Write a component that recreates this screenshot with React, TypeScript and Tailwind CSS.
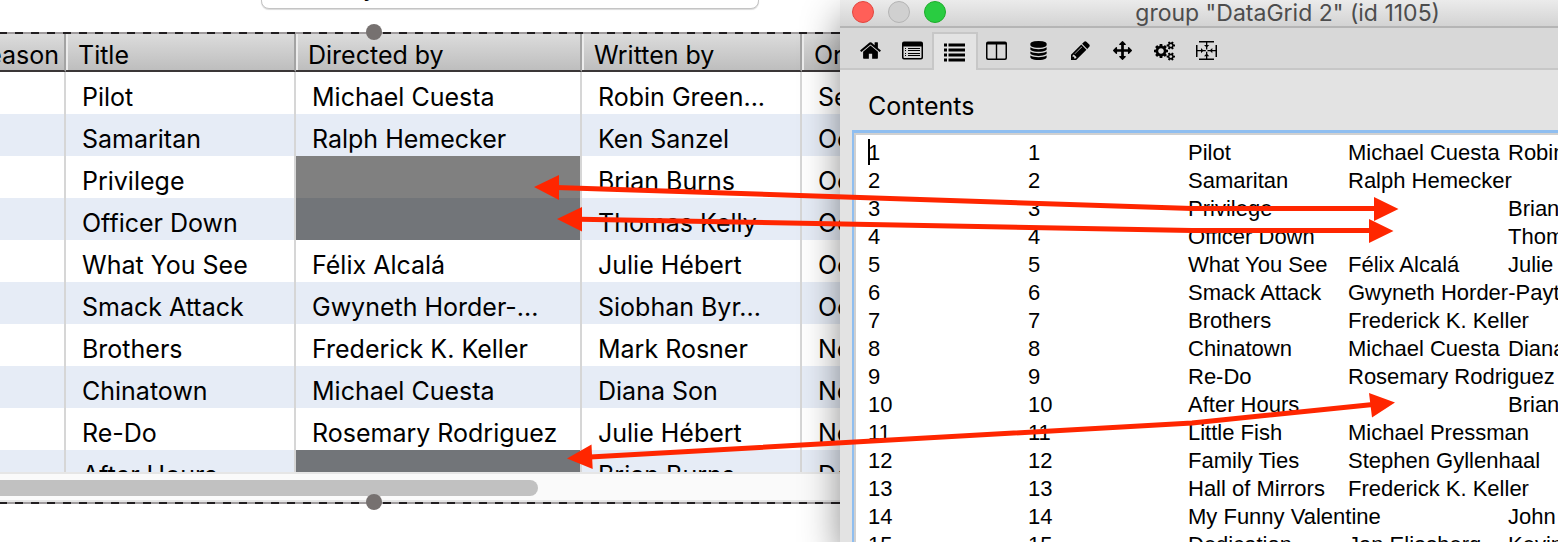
import React from "react";

type Episode = { title: string; director: string; writer: string; aired: string; missing?: boolean };

const episodes: Episode[] = [
  { title: "Pilot", director: "Michael Cuesta", writer: "Robin Green...", aired: "Sep" },
  { title: "Samaritan", director: "Ralph Hemecker", writer: "Ken Sanzel", aired: "Oct" },
  { title: "Privilege", director: "", writer: "Brian Burns", aired: "Oct", missing: true },
  { title: "Officer Down", director: "", writer: "Thomas Kelly", aired: "Oct", missing: true },
  { title: "What You See", director: "Félix Alcalá", writer: "Julie Hébert", aired: "Oct" },
  { title: "Smack Attack", director: "Gwyneth Horder-...", writer: "Siobhan Byr...", aired: "Oct" },
  { title: "Brothers", director: "Frederick K. Keller", writer: "Mark Rosner", aired: "Nov" },
  { title: "Chinatown", director: "Michael Cuesta", writer: "Diana Son", aired: "Nov" },
  { title: "Re-Do", director: "Rosemary Rodriguez", writer: "Julie Hébert", aired: "Nov" },
  { title: "After Hours", director: "", writer: "Brian Burns", aired: "Dec", missing: true },
];

const contents = [
  "1\t1\tPilot\tMichael Cuesta\tRobin",
  "2\t2\tSamaritan\tRalph Hemecker",
  "3\t3\tPrivilege\t\tBrian",
  "4\t4\tOfficer Down\t\tThomas",
  "5\t5\tWhat You See\tFélix Alcalá\tJulie",
  "6\t6\tSmack Attack\tGwyneth Horder-Payton",
  "7\t7\tBrothers\tFrederick K. Keller",
  "8\t8\tChinatown\tMichael Cuesta\tDiana",
  "9\t9\tRe-Do\tRosemary Rodriguez",
  "10\t10\tAfter Hours\t\tBrian",
  "11\t11\tLittle Fish\tMichael Pressman",
  "12\t12\tFamily Ties\tStephen Gyllenhaal",
  "13\t13\tHall of Mirrors\tFrederick K. Keller",
  "14\t14\tMy Funny Valentine\tJohn",
  "15\t15\tDedication\tJan Eliasberg\tKevin",
].join("\n");

const HomeIcon = () => (
  <svg viewBox="0 0 1792 1792" className="size-[23px]" fill="currentColor">
    <path d="M1472 992v480q0 26-19 45t-45 19h-384v-384h-256v384h-384q-26 0-45-19t-19-45v-480q0-1 .5-3t.5-3l575-474 575 474q1 2 1 6zm223-69l-62 74q-8 9-21 11h-3q-13 0-21-7l-692-577-692 577q-12 8-24 7-13-2-21-11l-62-74q-8-10-7-23.5t11-21.5l719-599q32-26 76-26t76 26l244 204v-195q0-14 9-23t23-9h192q14 0 23 9t9 23v408l219 182q10 8 11 21.5t-7 23.5z" />
  </svg>
);

const FormIcon = () => (
  <svg viewBox="0.5 0.5 21 21" className="size-[21px]" fill="currentColor">
    <path fillRule="evenodd" d="M2.5 2h17A2 2 0 0 1 21.500 4v14a2 2 0 0 1-2 2h-17a2 2 0 0 1-2-2V4a2 2 0 0 1 2-2ZM2 7v10.800a.7.7 0 0 0 .7.700h16.600a.7.7 0 0 0 .7-.7V7Z" />
    <path d="M3.500 8.500h1v1h-1zM6.500 8.500h12v1h-12zM3.500 10.500h1v1h-1zM6.500 10.500h12v1h-12zM3.500 13.500h1v1h-1zM6.500 13.500h12v1h-12zM3.500 15.500h1v1h-1zM6.500 15.500h12v1h-12z" />
  </svg>
);

const ListIcon = () => (
  <svg viewBox="0.5 0.5 21 21" className="size-[21px]" fill="currentColor">
    <path d="M.5 2h3v3h-3zM5 2h16.500v3H5zM.5 7h3v3h-3zM5 7h16.500v3H5zM.5 12h3v3h-3zM5 12h16.500v3H5zM.5 17h3v3h-3zM5 17h16.500v3H5z" />
  </svg>
);

const ColumnsIcon = () => (
  <svg viewBox="0.5 0.5 21 21" className="size-[21px]" fill="currentColor">
    <path fillRule="evenodd" d="M2.500 2h17a2 2 0 0 1 2 2v14.500a2 2 0 0 1-2 2h-17a2 2 0 0 1-2-2V4a2 2 0 0 1 2-2ZM2 5v13.300a.7.7 0 0 0 .7.700h7.600V5Zm9.700 0v14h7.600a.7.7 0 0 0 .7-.7V5Z" />
  </svg>
);

const DatabaseIcon = () => (
  <svg viewBox="0 0 1792 1792" className="size-[19px]" fill="currentColor">
    <path d="M896 768q237 0 443-43t325-127v170q0 69-103 128t-280 93.5-385 34.5-385-34.5-280-93.5-103-128v-170q119 84 325 127t443 43zm0 768q237 0 443-43t325-127v170q0 69-103 128t-280 93.5-385 34.5-385-34.5-280-93.5-103-128v-170q119 84 325 127t443 43zm0-384q237 0 443-43t325-127v170q0 69-103 128t-280 93.5-385 34.5-385-34.5-280-93.5-103-128v-170q119 84 325 127t443 43zm0-1152q208 0 385 34.5t280 93.5 103 128v128q0 69-103 128t-280 93.5-385 34.5-385-34.5-280-93.5-103-128v-128q0-69 103-128t280-93.5 385-34.5z" />
  </svg>
);

const PencilIcon = () => (
  <svg viewBox="128 128 1536 1536" className="size-[19px]" fill="currentColor">
    <path d="M491 1536l91-91-235-235-91 91v107h128v128h107zm523-928q0-22-22-22-10 0-17 7l-542 542q-7 7-7 17 0 22 22 22 10 0 17-7l542-542q7-7 7-17zm-54-192l416 416-832 832h-416v-416zm683 96q0 53-37 90l-166 166-416-416 166-165q36-38 90-38 53 0 91 38l235 234q37 39 37 91z" />
  </svg>
);

const MoveIcon = () => (
  <svg viewBox="0 0 1792 1792" className="size-[19px]" fill="currentColor">
    <path d="M1792 896q0 26-19 45l-256 256q-19 19-45 19t-45-19-19-45v-128h-384v384h128q26 0 45 19t19 45-19 45l-256 256q-19 19-45 19t-45-19l-256-256q-19-19-19-45t19-45 45-19h128v-384h-384v128q0 26-19 45t-45 19-45-19l-256-256q-19-19-19-45t19-45l256-256q19-19 45-19t45 19 19 45v128h384v-384h-128q-26 0-45-19t-19-45 19-45l256-256q19-19 45-19t45 19l256 256q19 19 19 45t-19 45-45 19h-128v384h384v-128q0-26 19-45t45-19 45 19l256 256q19 19 19 45z" />
  </svg>
);

const CogsIcon = () => (
  <svg viewBox="0 0 1920 1792" className="h-[20px] w-[21px]" fill="currentColor">
    <path d="M896 896q0-106-75-181t-181-75-181 75-75 181 75 181 181 75 181-75 75-181zm768 512q0-52-38-90t-90-38-90 38-38 90q0 53 37.5 90.5t90.5 37.5 90.5-37.5 37.5-90.5zm0-1024q0-52-38-90t-90-38-90 38-38 90q0 53 37.5 90.5t90.5 37.5 90.5-37.5 37.5-90.5zm-384 421v185q0 10-7 19.5t-16 10.5l-155 24q-11 35-32 76 34 48 90 115 7 11 7 20 0 12-7 19-23 30-82.500 89.500t-78.500 59.500q-11 0-21-7l-115-90q-37 19-77 31-11 108-23 155-7 24-30 24h-186q-11 0-20-7.500t-10-17.500l-23-153q-34-10-75-31l-118 89q-7 7-20 7-11 0-21-8-144-133-144-160 0-9 7-19 10-14 41-53t47-61q-23-44-35-82l-152-24q-10-1-17-9.500t-7-19.500v-185q0-10 7-19.500t16-10.500l155-24q11-35 32-76-34-48-90-115-7-11-7-20 0-12 7-20 22-30 82-89t79-59q11 0 21 7l115 90q34-18 77-32 11-108 23-154 7-24 30-24h186q11 0 20 7.500t10 17.500l23 153q34 10 75 31l118-89q8-7 20-7 11 0 21 8 144 133 144 160 0 8-7 19-12 16-42 54t-45 60q23 48 34 82l152 23q10 2 17 10.500t7 19.500zm640 533v140q0 16-149 31-12 27-30 52 51 113 51 138 0 4-4 7-122 71-124 71-8 0-46-47t-52-68q-20 2-30 2t-30-2q-14 21-52 68t-46 47q-2 0-124-71-4-3-4-7 0-25 51-138-18-25-30-52-149-15-149-31v-140q0-16 149-31 13-29 30-52-51-113-51-138 0-4 4-7 4-2 35-20t59-34 30-16q8 0 46 46.500t52 67.500q20-2 30-2t30 2q51-71 92-112l6-2q4 0 124 70 4 3 4 7 0 25-51 138 17 23 30 52 149 15 149 31zm0-1024v140q0 16-149 31-12 27-30 52 51 113 51 138 0 4-4 7-122 71-124 71-8 0-46-47t-52-68q-20 2-30 2t-30-2q-14 21-52 68t-46 47q-2 0-124-71-4-3-4-7 0-25 51-138-18-25-30-52-149-15-149-31v-140q0-16 149-31 13-29 30-52-51-113-51-138 0-4 4-7 4-2 35-20t59-34 30-16q8 0 46 46.500t52 67.500q20-2 30-2t30 2q51-71 92-112l6-2q4 0 124 70 4 3 4 7 0 25-51 138 17 23 30 52 149 15 149 31z" />
  </svg>
);

const ResizeIcon = () => (
  <svg viewBox="0 0 21 21" className="size-[21px]" fill="currentColor">
    <path d="M3 1h15v1.500H3zM3 18.500h15V20H3zM0 5h1.500v12H0zM19.500 5H21v12h-1.500zM10 2h1.300v7.500H10zM10 11.700h1.300V19H10zM1 10h8.800v1.300H1zM11.500 10H20v1.300h-8.500z" />
    <path d="M10.600 7.500L8 5h5.300zM10.600 13.500L8 16.200h5.300zM7.500 10.600L5 8v5.300zM13.700 10.600L16.300 8v5.300z" />
  </svg>
);

const tools = [
  { label: "Basic", icon: <HomeIcon /> },
  { label: "Custom", icon: <FormIcon /> },
  { label: "Contents", icon: <ListIcon /> },
  { label: "Columns", icon: <ColumnsIcon /> },
  { label: "Database", icon: <DatabaseIcon /> },
  { label: "Colors", icon: <PencilIcon /> },
  { label: "Position", icon: <MoveIcon /> },
  { label: "Advanced", icon: <CogsIcon /> },
  { label: "Geometry", icon: <ResizeIcon /> },
];

function SelectionEdge() {
  return (
    <div className="relative h-[2px] bg-[repeating-linear-gradient(90deg,#211e20_0_8px,#9f9b9d_8px_16px)] bg-[position:-1px_0]">
      <span className="absolute -top-2 left-[366px] z-10 size-4 rounded-full bg-[#767170]" />
    </div>
  );
}

const headCell =
  "overflow-hidden border-r-2 border-b-2 border-r-[#a3a3a3] border-b-[#3a3637] p-0 text-left font-normal last:border-r-0";
const bodyCell = "overflow-hidden whitespace-nowrap border-r-2 border-[#d6d6d6] py-0 pr-0 pl-4 last:border-r-0";

function DataGrid() {
  return (
    <section className="flex flex-col">
      <SelectionEdge />
      <div className="h-[438px] overflow-hidden">
        <table className="w-full table-fixed border-separate border-spacing-0 text-[25px] leading-[42px]">
          <colgroup>
            <col className="w-[66px]" />
            <col className="w-[230px]" />
            <col className="w-[286px]" />
            <col className="w-[220px]" />
            <col />
          </colgroup>
          <thead>
            <tr className="h-[38px] bg-linear-to-b from-[#dcdcdc] to-[#bcbcbc] leading-9">
              <th className={headCell}>
                <span className="flex h-9 items-center justify-end pt-[6px] pr-[5px]">Season</span>
              </th>
              {["Title", "Directed by", "Written by", "Original"].map((name) => (
                <th key={name} className={headCell}>
                  <span className="flex h-9 items-center border-l-2 border-[#ececec] pt-[6px] pl-[10px] whitespace-nowrap">{name}</span>
                </th>
              ))}
            </tr>
          </thead>
          <tbody>
            {episodes.map((e, i) => (
              <tr key={i} className="h-[42px] odd:bg-white even:bg-[#e6ecf6]">
                <td className={bodyCell} />
                <td className={bodyCell}><span className="block h-[42px] pt-1">{e.title}</span></td>
                <td className={`${bodyCell} ${e.missing ? (i % 2 ? "bg-[#727579] bg-clip-padding" : "bg-[#808080] bg-clip-padding") : ""}`}>
                  <span className="block h-[42px] pt-1">{e.director}</span>
                </td>
                <td className={bodyCell}><span className="block h-[42px] pt-1">{e.writer}</span></td>
                <td className={bodyCell}><span className="block h-[42px] pt-1">{e.aired}</span></td>
              </tr>
            ))}
          </tbody>
        </table>
      </div>
      <div className="border-y-2 border-[#e6e6e6] bg-[#fafafa] pt-[6px] pb-1">
        <div className="h-4 w-[538px] rounded-r-full bg-[#c1c1c1]" />
      </div>
      <SelectionEdge />
    </section>
  );
}

function Inspector() {
  return (
    <section className="relative flex min-w-0 flex-col bg-[#e3e3e3] shadow-[0_16px_36px_rgba(0,0,0,0.45)]">
      <header className="flex h-7 items-center border-b-2 border-[#b5b5b5] bg-linear-to-b from-[#ebebeb] to-[#d3d3d3] pl-3">
        <div className="flex gap-[14px] pb-[2px]">
          <button aria-label="Close" className="size-[22px] rounded-full border border-[#e2463f] bg-[#ff5f58]" />
          <button aria-label="Minimize" className="size-[22px] rounded-full border border-[#b4b4b4] bg-[#d0d0d0]" />
          <button aria-label="Zoom" className="size-[22px] rounded-full border border-[#1dad2b] bg-[#29cc41]" />
        </div>
        <h1 className="flex-1 pr-[118px] text-right text-[23px] leading-6 whitespace-nowrap text-[#4d4d4d]">group "DataGrid 2" (id 1105)</h1>
      </header>
      <nav className="flex h-[42px] items-end border-b-2 border-[#c7c7c7] bg-[#d8d8d8] pl-[10px]">
        {tools.map((t, i) => (
          <button
            key={t.label}
            aria-label={t.label}
            className={
              i === 2
                ? "z-10 -mx-[2px] -mb-[2px] flex h-[38px] w-[46px] items-center justify-center border-2 border-b-0 border-[#c7c7c7] bg-[#e3e3e3] pr-px"
                : "flex h-[35px] w-[42px] items-center justify-center pr-px"
            }
          >
            {t.icon}
          </button>
        ))}
      </nav>
      <label htmlFor="contents" className="pt-5 pb-2 pl-7 text-[25px] leading-8">Contents</label>
      <div className="relative ml-3 flex flex-1 border-t-[3px] border-l-2 border-[#8fbef0]">
        <textarea
          id="contents"
          spellCheck={false}
          wrap="off"
          defaultValue={contents}
          className="min-h-0 flex-1 resize-none overflow-hidden border-t-2 border-l-2 border-[#d0d0d0] bg-white pt-1 pl-3 font-['Liberation_Sans',Arial,sans-serif] text-[22px] leading-7 whitespace-pre outline-none [tab-size:160px]"
        />
        <span className="absolute top-[6px] left-[14px] h-[26px] w-[2px] bg-black" />
      </div>
    </section>
  );
}

function Annotations() {
  return (
    <svg viewBox="0 0 1558 542" className="pointer-events-none absolute top-0 left-0 h-[542px] w-[1558px]" fill="none" stroke="#ff2600" strokeWidth="5">
      <path d="M556 187.500L1192 208.500H1376M580 219.200L1192 230.500H1372M590 457L1192 423L1373 404.500" />
      <path stroke="none" fill="#ff2600" d="M534 187l25-12v25zM1398.500 209l-24.500-12v24zM557 219l25-12v24.500zM1393.500 231l-24.500-12v24zM567 458.500l24.500-14 1.200 24.500zM1395 402.500l-26-9.500 3 24.500z" />
    </svg>
  );
}

export default function App() {
  return (
    <main className="relative grid h-screen grid-cols-[840fr_718fr] overflow-hidden bg-white font-['Inter',sans-serif] text-black">
      <div className="flex min-w-0 flex-col">
        <div className="flex h-8 items-start pl-[261px]">
          <div className="flex h-[10px] w-[498px] items-end pb-px">
            <input
              aria-label="Field"
              defaultValue="y"
              className="h-11 w-full shrink-0 rounded-lg border border-[#c4c4c4] bg-white pl-[101px] text-[25px] leading-8 shadow-[0_1px_1px_rgba(0,0,0,0.15)] outline-none"
            />
          </div>
        </div>
        <DataGrid />
      </div>
      <Inspector />
      <Annotations />
    </main>
  );
}
